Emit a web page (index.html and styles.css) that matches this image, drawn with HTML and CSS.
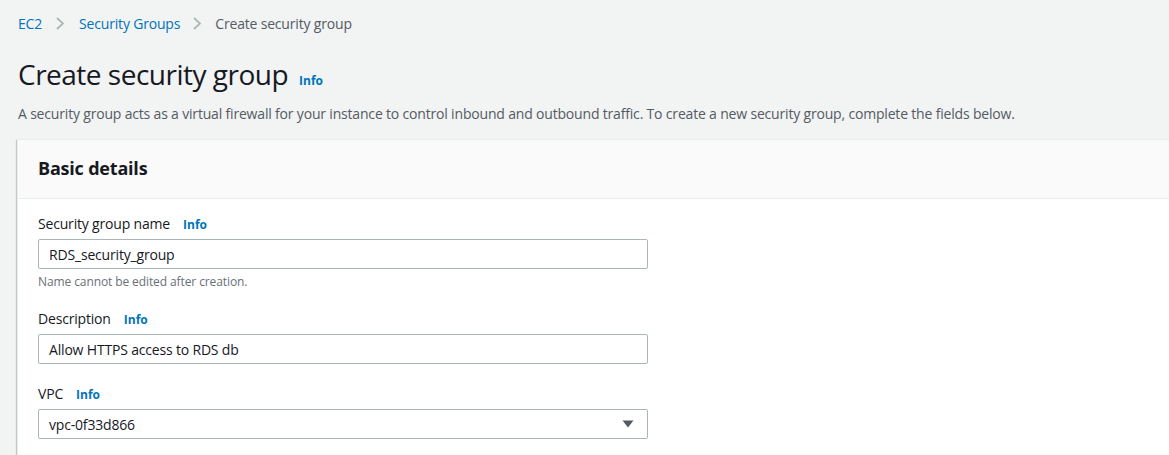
FILE: index.html
```html
<!DOCTYPE html>
<html lang="en">
<head>
<meta charset="utf-8">
<title>Create security group</title>
<link rel="stylesheet" href="styles.css">
</head>
<body>
<div class="page">
  <nav class="crumbs">
    <a class="crumb-link">EC2</a>
    <svg class="chev" width="8" height="13" viewBox="0 0 8 13"><path d="M1 1 L7 6.5 L1 12" fill="none" stroke="#aab7b8" stroke-width="1.8"/></svg>
    <a class="crumb-link">Security Groups</a>
    <svg class="chev chev-2" width="8" height="13" viewBox="0 0 8 13"><path d="M1 1 L7 6.5 L1 12" fill="none" stroke="#aab7b8" stroke-width="1.8"/></svg>
    <span class="crumb-current">Create security group</span>
  </nav>
  <h1 class="title">Create security group <span class="info">Info</span></h1>
  <p class="lead">A security group acts as a virtual firewall for your instance to control inbound and outbound traffic. To create a new security group, complete the fields below.</p>
  <section class="panel">
    <header class="panel-head"><h2>Basic details</h2></header>
    <div class="panel-body">
      <div class="field">
        <div class="label">Security group name <span class="info">Info</span></div>
        <div class="input">RDS_security_group</div>
        <div class="hint">Name cannot be edited after creation.</div>
      </div>
      <div class="field">
        <div class="label">Description <span class="info">Info</span></div>
        <div class="input">Allow HTTPS access to RDS db</div>
      </div>
      <div class="field">
        <div class="label">VPC <span class="info">Info</span></div>
        <div class="input select">vpc-0f33d866<svg class="caret" width="12" height="8" viewBox="0 0 12 8"><path d="M0.5 0.5 H11.5 L6 7.5 Z" fill="#545b64"/></svg></div>
      </div>
    </div>
  </section>
</div>
</body>
</html>
```
FILE: styles.css
```css
* { box-sizing: border-box; }
html, body { margin: 0; padding: 0; }
body {
  background: #f2f3f3;
  font-family: "Open Sans", "Noto Sans", sans-serif;
  color: #16191f;
  font-size: 14px;
  letter-spacing: -0.18px;
  overflow: hidden;
}
.page { padding: 13px 0 0 18px; width: 1200px; }
.crumbs { display: flex; align-items: center; height: 20px; font-size: 14px; }
.crumb-link { color: #0073bb; }
.chev { margin: 0 15px 0 14px; }
.chev-2 { margin: 0 14px 0 13px; }
.crumb-current { color: #545b64; }
.title {
  margin: 23px 0 0 0;
  font-size: 28px;
  font-weight: 400;
  line-height: 36px;
  letter-spacing: -0.5px;
  display: flex;
  align-items: baseline;
  gap: 11px;
}
.info { color: #0073bb; font-size: 12px; font-weight: 700; letter-spacing: 0; }
.lead { margin: 5px 0 0 0; color: #545b64; line-height: 20px; font-size: 14px; }
.panel {
  margin: 15px 0 0 -1px;
  background: #fff;
  border-top: 1px solid #eaeded;
  border-left: 1px solid #eaeded;
  box-shadow: 0 1px 1px 0 rgba(0,28,36,.3), 1px 1px 1px 0 rgba(0,28,36,.15), -1px 1px 1px 0 rgba(0,28,36,.15);
  height: 400px;
}
.panel-head {
  background: #fafafa;
  border-bottom: 1px solid #eaeded;
  height: 59px;
  padding: 0 20px;
  display: flex;
  align-items: center;
}
.panel-head h2 { margin: -2px 0 0 0; font-size: 18px; font-weight: 700; line-height: 22px; letter-spacing: -0.2px; }
.panel-body { padding: 15px 20px; }
.field { margin-bottom: 20px; }
.label { line-height: 20px; display: flex; align-items: baseline; gap: 13px; }
.input {
  margin-top: 4px;
  width: 610px;
  height: 30px;
  border: 1px solid #aab7b8;
  border-radius: 2px;
  padding: 0 10px;
  display: flex;
  align-items: center;
  background: #fff;
}
.select { justify-content: space-between; }
.caret { margin-right: 3px; }
.hint { margin-top: 5px; color: #687078; font-size: 12px; line-height: 15px; letter-spacing: -0.1px; }
```
